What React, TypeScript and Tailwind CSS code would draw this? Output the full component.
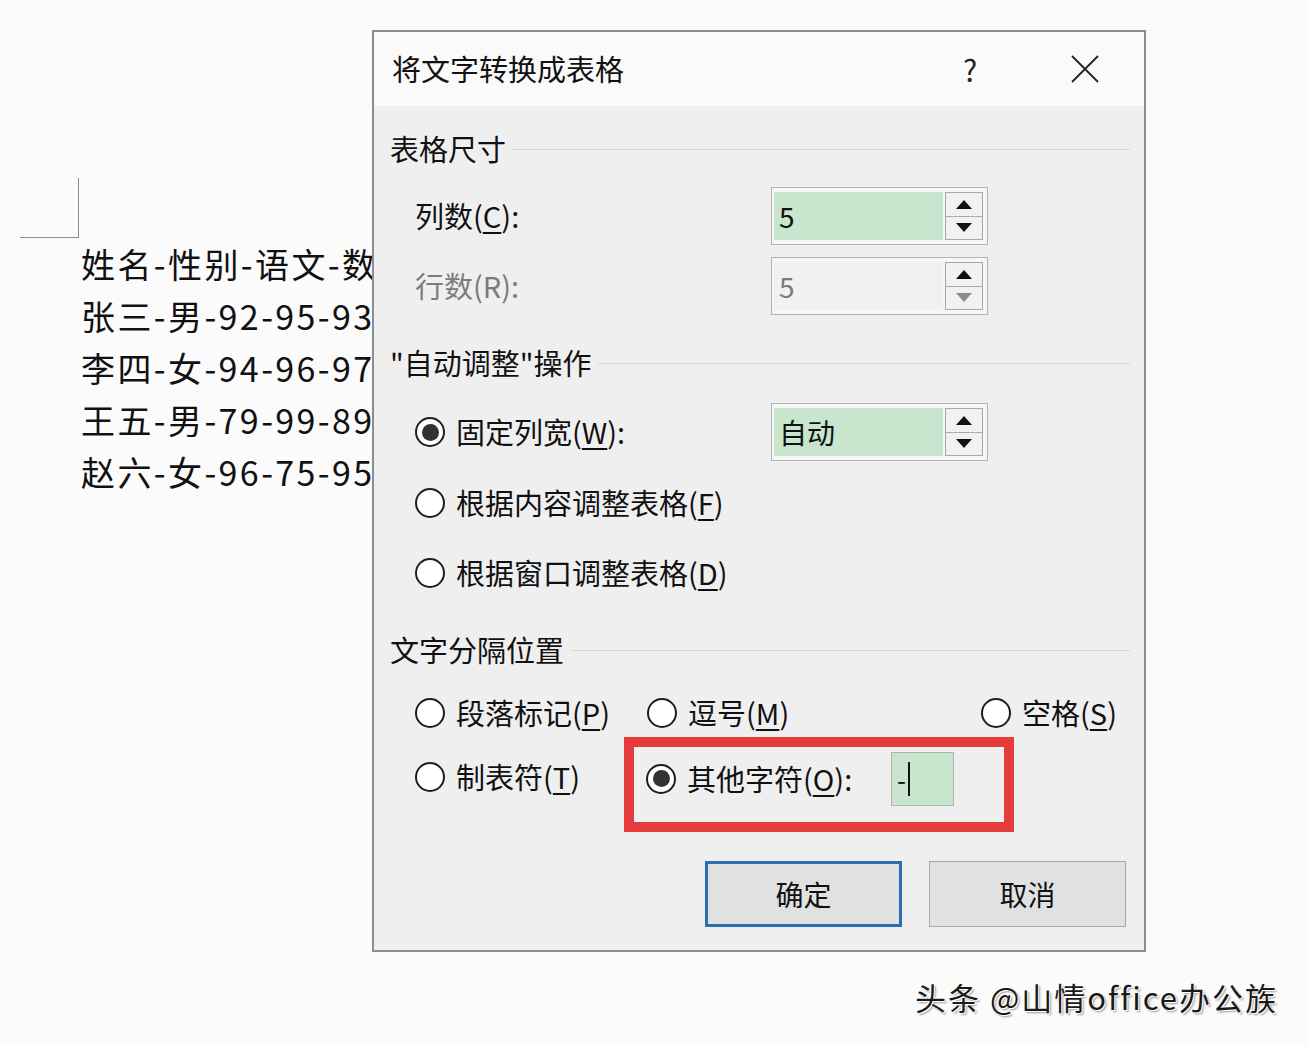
import React from "react";

const font = { fontFamily: '"Noto Sans CJK SC", "Noto Sans", sans-serif' };

const docLines = [
  "姓名-性别-语文-数",
  "张三-男-92-95-93",
  "李四-女-94-96-97",
  "王五-男-79-99-89",
  "赵六-女-96-75-95",
];

function Tri({ up, dim }: { up?: boolean; dim?: boolean }) {
  return (
    <svg width="16" height="9" viewBox="0 0 16 9">
      <polygon
        points={up ? "8,0 16,9 0,9" : "0,0 16,0 8,9"}
        fill={dim ? "#8a8a8a" : "#111"}
      />
    </svg>
  );
}

function Spinner({ value, green, dim }: { value: string; green?: boolean; dim?: boolean }) {
  return (
    <div className="flex h-[58px] w-[217px] gap-[2px] border border-[#b3b3b3] bg-[#f6f6f6] py-[4px] pr-[4px] pl-[2px]">
      <div
        className={`flex flex-1 items-center pl-[5px] text-[28px] ${
          green ? "bg-[#c8e6cd] text-[#111]" : "bg-[#f2f1f2] text-[#7a7a7a]"
        }`}
      >
        {value}
      </div>
      <div className="flex w-[38px] flex-col border border-[#a9a9a9]">
        <div className="flex flex-1 items-center justify-center border-b border-[#a9a9a9] bg-[#f1f1f1]">
          <Tri up />
        </div>
        <div className="flex flex-1 items-center justify-center bg-[#f1f1f1]">
          <Tri dim={dim} />
        </div>
      </div>
    </div>
  );
}

function Radio({ checked }: { checked?: boolean }) {
  return (
    <div className="flex size-[30px] shrink-0 items-center justify-center rounded-full border-2 border-[#1e1e1e] bg-white">
      {checked && <div className="size-[17px] rounded-full bg-[#333]" />}
    </div>
  );
}

function Option({ label, mn, tail = "", checked }: { label: string; mn: string; tail?: string; checked?: boolean }) {
  return (
    <div className="flex items-center gap-[11px]">
      <Radio checked={checked} />
      <span className="text-[29px] text-[#111]">
        {label}(<span className="underline underline-offset-4">{mn}</span>){tail}
      </span>
    </div>
  );
}

function Section({ title }: { title: string }) {
  return (
    <div className="flex h-[40px] items-center gap-[6px] pr-[14px] pl-[16px]">
      <span className="text-[29px] text-[#111]">{title}</span>
      <div className="h-px flex-1 bg-[#d6d6d6]" />
    </div>
  );
}

export default function App() {
  return (
    <div className="relative flex h-[1046px] w-[1308px] overflow-hidden bg-[#fbfbfc]" style={font}>
      {/* document behind the dialog */}
      <div className="w-[372px] shrink-0 overflow-hidden">
        <div className="mt-[178px] ml-[20px] h-[60px] w-[59px] border-r border-b border-[#8d8d8d]" />
        <div className="ml-[81px] flex flex-col">
          {docLines.map((l) => (
            <div key={l} className="h-[52px] whitespace-nowrap text-[34px] leading-[52px] tracking-[2.4px] text-[#111]">
              {l}
            </div>
          ))}
        </div>
      </div>

      {/* dialog */}
      <div className="mt-[30px] flex h-[922px] w-[774px] flex-col border-2 border-[#8d8d8d] bg-[#f0eff0]">
        <div className="flex h-[74px] items-center bg-[#fafafa] pl-[18px]">
          <span className="flex-1 text-[29px] text-[#111]">将文字转换成表格</span>
          <span className="w-[40px] text-center text-[30px] text-[#222]">?</span>
          <div className="ml-[36px] flex w-[118px] justify-center">
            <svg width="28" height="28" viewBox="0 0 28 28">
              <path d="M1 1 L27 27 M27 1 L1 27" stroke="#222" strokeWidth="1.8" />
            </svg>
          </div>
        </div>

        <div className="mt-[23px]">
          <Section title="表格尺寸" />
        </div>
        <div className="mt-[18px] flex items-center pl-[41px]">
          <span className="w-[356px] text-[29px] text-[#111]">
            列数(<span className="underline underline-offset-4">C</span>):
          </span>
          <Spinner value="5" green />
        </div>
        <div className="mt-[12px] flex items-center pl-[41px]">
          <span className="w-[356px] text-[29px] text-[#7c7c7c]">行数(R):</span>
          <Spinner value="5" dim />
        </div>

        <div className="mt-[28px]">
          <Section title={'"自动调整"操作'} />
        </div>
        <div className="mt-[20px] flex items-center pl-[41px]">
          <div className="w-[356px]">
            <Option label="固定列宽" mn="W" tail=":" checked />
          </div>
          <Spinner value="自动" green />
        </div>
        <div className="mt-[22px] flex h-[40px] items-center pl-[41px]">
          <Option label="根据内容调整表格" mn="F" />
        </div>
        <div className="mt-[30px] flex h-[40px] items-center pl-[41px]">
          <Option label="根据窗口调整表格" mn="D" />
        </div>

        <div className="mt-[37px]">
          <Section title="文字分隔位置" />
        </div>
        <div className="mt-[23px] flex h-[40px] items-center pl-[41px]">
          <div className="w-[232px]">
            <Option label="段落标记" mn="P" />
          </div>
          <div className="w-[334px]">
            <Option label="逗号" mn="M" />
          </div>
          <Option label="空格" mn="S" />
        </div>
        <div className="mt-[4px] flex h-[95px] items-start pl-[41px]">
          <div className="flex h-[80px] w-[209px] items-center">
            <Option label="制表符" mn="T" />
          </div>
          <div className="flex h-[95px] w-[390px] items-center border-[10px] border-[#e63b3b] pb-[12px] pl-[12px]">
            <div className="w-[245px]">
              <Option label="其他字符" mn="O" tail=":" checked />
            </div>
            <div className="flex h-[54px] w-[63px] items-center border border-[#b3b3b3] bg-[#c8e6cd] pl-[5px] text-[26px] text-[#111]">
              -<span className="ml-[2px] h-[34px] w-[2px] bg-[#111]" />
            </div>
          </div>
        </div>

        <div className="mt-[29px] flex gap-[27px] pl-[331px]">
          <button className="flex h-[66px] w-[197px] items-center justify-center border-[3px] border-[#2a6fb0] bg-[#e1e1e1] text-[28px] text-[#111]">
            确定
          </button>
          <button className="flex h-[66px] w-[197px] items-center justify-center border border-[#a8a8a8] bg-[#e1e1e1] text-[28px] text-[#111]">
            取消
          </button>
        </div>
      </div>

      {/* watermark */}
      <div className="absolute top-[977px] left-[915px] text-[31px] leading-[40px] tracking-[2px] text-[#1a1a1a] [text-shadow:1px_1px_0_#fff,-1px_-1px_0_#fff,2px_2px_2px_#999]">
        头条 @山情office办公族
      </div>
    </div>
  );
}
